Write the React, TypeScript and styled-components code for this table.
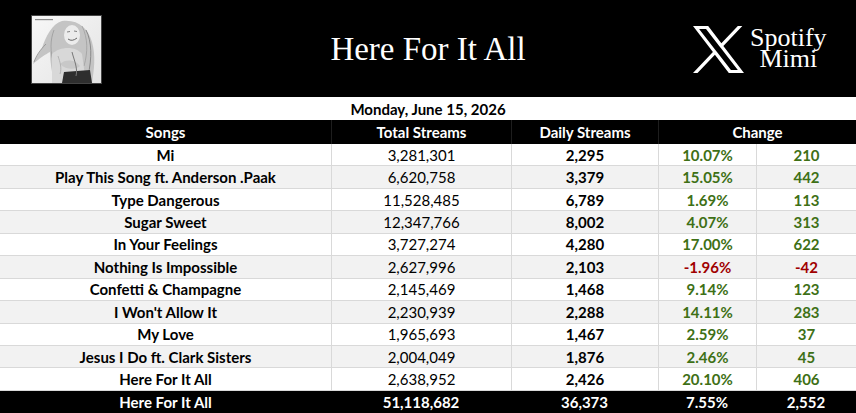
import { createGlobalStyle } from 'styled-components';
import styled from 'styled-components';

type Song = {
  title: string;
  total: string;
  daily: string;
  pct: string;
  diff: string;
};

const songs: Song[] = [
  { title: 'Mi', total: '3,281,301', daily: '2,295', pct: '10.07%', diff: '210' },
  { title: 'Play This Song ft. Anderson .Paak', total: '6,620,758', daily: '3,379', pct: '15.05%', diff: '442' },
  { title: 'Type Dangerous', total: '11,528,485', daily: '6,789', pct: '1.69%', diff: '113' },
  { title: 'Sugar Sweet', total: '12,347,766', daily: '8,002', pct: '4.07%', diff: '313' },
  { title: 'In Your Feelings', total: '3,727,274', daily: '4,280', pct: '17.00%', diff: '622' },
  { title: 'Nothing Is Impossible', total: '2,627,996', daily: '2,103', pct: '-1.96%', diff: '-42' },
  { title: 'Confetti & Champagne', total: '2,145,469', daily: '1,468', pct: '9.14%', diff: '123' },
  { title: "I Won't Allow It", total: '2,230,939', daily: '2,288', pct: '14.11%', diff: '283' },
  { title: 'My Love', total: '1,965,693', daily: '1,467', pct: '2.59%', diff: '37' },
  { title: 'Jesus I Do ft. Clark Sisters', total: '2,004,049', daily: '1,876', pct: '2.46%', diff: '45' },
  { title: 'Here For It All', total: '2,638,952', daily: '2,426', pct: '20.10%', diff: '406' },
];

const GlobalStyle = createGlobalStyle`
  html, body {
    margin: 0;
    padding: 0;
    background: #fff;
  }
  body {
    font-family: Lato, "Open Sans", sans-serif;
  }
`;

export default function App() {
  return (
    <>
      <GlobalStyle />
      <Page>
        <Banner>
          <Cover />
          <Title>Here For It All</Title>
          <Brand>
            <XLogo />
            <BrandText>
              <span>Spotify</span>
              <span>Mimi</span>
            </BrandText>
          </Brand>
        </Banner>

        <DateRow>Monday, June 15, 2026</DateRow>

        <HeadRow>
          <HeadCell>Songs</HeadCell>
          <HeadCell>Total Streams</HeadCell>
          <HeadCell>Daily Streams</HeadCell>
          <HeadCell $span>Change</HeadCell>
        </HeadRow>

        {songs.map((song, i) => {
          const down = song.pct.startsWith('-');
          return (
            <DataRow key={song.title} $shaded={i % 2 === 1}>
              <Cell $bold>{song.title}</Cell>
              <Cell>{song.total}</Cell>
              <Cell $bold>{song.daily}</Cell>
              <Cell $bold $tone={down ? 'down' : 'up'}>{song.pct}</Cell>
              <Cell $bold $tone={down ? 'down' : 'up'}>{song.diff}</Cell>
            </DataRow>
          );
        })}

        <TotalRow>
          <TotalCell>Here For It All</TotalCell>
          <TotalCell>51,118,682</TotalCell>
          <TotalCell>36,373</TotalCell>
          <TotalCell>7.55%</TotalCell>
          <TotalCell>2,552</TotalCell>
        </TotalRow>
      </Page>
    </>
  );
}

function Cover() {
  return (
    <CoverFrame>
      <svg width="69" height="67" viewBox="0 0 69 67">
        <defs>
          <linearGradient id="bg" x1="0" y1="0" x2="1" y2="1">
            <stop offset="0" stopColor="#f7f7f7" />
            <stop offset="1" stopColor="#e4e4e4" />
          </linearGradient>
        </defs>
        <rect width="69" height="67" fill="url(#bg)" />
        <rect x="3" y="3" width="18" height="1.2" fill="#8a8a8a" />
        {/* hair */}
        <path d="M30 5 C20 8 14 20 10 32 C6 38 2 44 1 48 C8 42 14 38 18 36 C18 46 20 56 22 67 L60 67 C62 54 64 40 60 26 C56 12 46 3 30 5 Z" fill="#c4c4c4" />
        <path d="M14 28 C8 34 4 40 2 46" stroke="#8e8e8e" strokeWidth="0.8" fill="none" />
        <path d="M22 14 C18 24 18 36 22 48" stroke="#9a9a9a" strokeWidth="0.8" fill="none" />
        <path d="M54 14 C60 26 60 42 56 60" stroke="#8a8a8a" strokeWidth="1" fill="none" />
        <path d="M50 10 C56 22 56 36 52 50" stroke="#a0a0a0" strokeWidth="0.8" fill="none" />
        {/* face */}
        <ellipse cx="40" cy="19" rx="8" ry="10" fill="#ececec" />
        <path d="M36 23 Q40 26 45 22" stroke="#555" strokeWidth="0.9" fill="none" />
        <path d="M35 16 L38 15.5 M42 15 L45 15.5" stroke="#666" strokeWidth="0.8" />
        {/* shoulders and arm */}
        <path d="M20 38 C28 30 44 30 50 38 L54 67 L20 67 C20 56 20 46 20 38 Z" fill="#d8d8d8" />
        <path d="M28 48 C34 42 44 44 48 50 C44 54 34 54 28 48 Z" fill="#c8c8c8" />
        <path d="M32 56 L58 54 L60 67 L30 67 Z" fill="#2e2e2e" />
        <path d="M40 36 C42 44 46 52 44 60" stroke="#777" strokeWidth="1" fill="none" />
        <path d="M26 40 C28 46 30 52 28 58" stroke="#aaa" strokeWidth="0.8" fill="none" />
      </svg>
    </CoverFrame>
  );
}

function XLogo() {
  return (
    <svg width="51" height="47" viewBox="0 0 1200 1227" preserveAspectRatio="none">
      <path
        fill="#fff"
        d="M714.163 519.284L1160.89 0H1055.03L667.137 450.887L357.328 0H0L468.492 681.821L0 1226.37H105.866L515.491 750.218L842.672 1226.37H1200L714.163 519.284ZM569.165 687.828L521.697 619.934L144.011 79.6944H306.615L611.412 515.685L658.88 583.579L1055.08 1150.3H892.476L569.165 687.828Z"
      />
    </svg>
  );
}

const Page = styled.div`
  width: 856px;
  height: 413px;
  overflow: hidden;
  background: #fff;
  color: #000;
`;

const Banner = styled.header`
  height: 97px;
  background: #000;
  display: grid;
  grid-template-columns: 300px 1fr 300px;
  align-items: center;
`;

const CoverFrame = styled.div`
  justify-self: start;
  margin-left: 31px;
  margin-top: 2px;
  width: 69px;
  height: 67px;
  border: 1px solid #444;
  line-height: 0;
`;

const Title = styled.h1`
  margin: 0;
  text-align: center;
  color: #fff;
  font-family: "Liberation Serif", "Times New Roman", serif;
  font-weight: 400;
  font-size: 33px;
  padding-top: 2px;
`;

const Brand = styled.div`
  justify-self: start;
  margin-left: 137px;
  display: flex;
  align-items: center;
  gap: 6px;
  margin-top: 1px;
`;

const BrandText = styled.div`
  display: flex;
  flex-direction: column;
  align-items: center;
  color: #fff;
  font-family: "Liberation Serif", "Times New Roman", serif;
  font-size: 26px;
  line-height: 21px;
  padding-bottom: 2px;
`;

const DateRow = styled.div`
  height: 23px;
  display: flex;
  align-items: center;
  justify-content: center;
  font-weight: 700;
  font-size: 15px;
`;

const columns = '331px 180px 147px 98px 1fr';

const HeadRow = styled.div`
  display: grid;
  grid-template-columns: ${columns};
  height: 24px;
  background: #000;
`;

const HeadCell = styled.div<{ $span?: boolean }>`
  grid-column: ${(p) => (p.$span ? 'span 2' : 'auto')};
  display: flex;
  align-items: center;
  justify-content: center;
  color: #fff;
  font-weight: 700;
  font-size: 15px;
  border-left: 1px solid #1e1e1e;
  &:first-child {
    border-left: none;
  }
`;

const DataRow = styled.div<{ $shaded: boolean }>`
  display: grid;
  grid-template-columns: ${columns};
  height: 22.45px;
  box-sizing: border-box;
  border-bottom: 1px solid #d9d9d9;
  background: ${(p) => (p.$shaded ? '#f2f2f2' : '#fff')};
`;

const Cell = styled.div<{ $bold?: boolean; $tone?: 'up' | 'down' }>`
  display: flex;
  align-items: center;
  justify-content: center;
  font-size: 15px;
  font-weight: ${(p) => (p.$bold ? 700 : 400)};
  color: ${(p) => (p.$tone === 'up' ? '#3e7016' : p.$tone === 'down' ? '#a00000' : '#000')};
  border-left: 1px solid #d9d9d9;
  &:first-child {
    border-left: none;
  }
`;

const TotalRow = styled.div`
  display: grid;
  grid-template-columns: ${columns};
  height: 23px;
  background: #000;
`;

const TotalCell = styled.div`
  display: flex;
  align-items: center;
  justify-content: center;
  color: #fff;
  font-weight: 700;
  font-size: 15px;
`;
